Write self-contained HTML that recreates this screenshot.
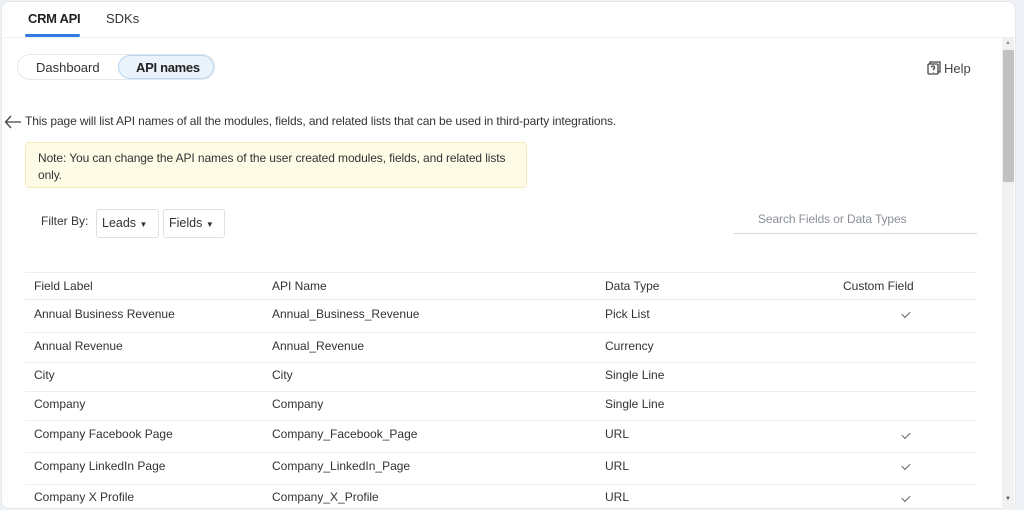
<!DOCTYPE html>
<html><head><style>
*{margin:0;padding:0;box-sizing:border-box}
body{width:1024px;height:510px;background:#eef1f5;font-family:"Liberation Sans",sans-serif;color:#333;position:relative;overflow:hidden;font-size:12px}
.card{position:absolute;left:1px;top:1px;width:1015px;height:508px;background:#fff;border:1px solid #e4e7ec;border-radius:8px;overflow:hidden}
.a{position:absolute;white-space:nowrap}
.sb{position:absolute;left:1002px;top:38px;width:12px;height:471px;background:#f1f1f1}
.th{position:absolute;left:1003px;top:50px;width:11px;height:132px;background:#c1c1c1}
.line{position:absolute;left:25px;width:952px;height:1px;background:#eceef2}
.ck{position:absolute;width:8px;height:5px;border-left:1.2px solid #666;border-bottom:1.2px solid #666;transform:rotate(-45deg)}
</style></head><body>
<div class="card"></div>
<div class="a" style="left:28px;top:11px;font-size:13px;font-weight:bold;color:#222;letter-spacing:-0.3px">CRM API</div>
<div class="a" style="left:25px;top:34px;width:55px;height:3px;border-radius:2px;background:#2f7de1"></div>
<div class="a" style="left:106px;top:11px;font-size:13px;color:#333">SDKs</div>
<div class="a" style="left:1px;top:37px;width:1014px;height:1px;background:#eef0f3"></div>
<div class="a" style="left:17px;top:54px;width:198px;height:26px;border:1px solid #e4e7ec;border-radius:14px;background:#fff"></div>
<div class="a" style="left:36px;top:60px;font-size:13px;color:#333">Dashboard</div>
<div class="a" style="left:118px;top:55px;width:96px;height:24px;border:1px solid #b9d7f0;border-radius:13px;background:#eaf3fb"></div>
<div class="a" style="left:136px;top:60px;font-size:13px;font-weight:bold;color:#222;letter-spacing:-0.3px">API names</div>
<svg class="a" style="left:927px;top:61px" width="14" height="14" viewBox="0 0 14 14" fill="none" stroke="#444" stroke-width="1.3"><rect x="1" y="3" width="10" height="10" rx="1"/><path d="M3 3V1h10v10h-2"/><path d="M4.5 6.5a1.5 1.5 0 1 1 2 1.4v1.3M6.5 11v.5"/></svg>
<div class="a" style="left:944px;top:61px;font-size:13px;color:#444">Help</div>
<svg class="a" style="left:4px;top:115px" width="18" height="14" viewBox="0 0 18 14" fill="none" stroke="#444" stroke-width="1.3"><path d="M17 7H2M7 1L1.5 7 7 13"/></svg>
<div class="a" style="left:25px;top:114px;font-size:12px;color:#333;letter-spacing:-0.12px">This page will list API names of all the modules, fields, and related lists that can be used in third-party integrations.</div>
<div class="a" style="left:25px;top:142px;width:502px;height:46px;background:#fefbe6;border:1px solid #f4ecbc;border-radius:4px"></div>
<div class="a" style="left:38px;top:150px;font-size:12px;color:#333;line-height:17px;letter-spacing:-0.1px">Note: You can change the API names of the user created modules, fields, and related lists<br>only.</div>
<div class="a" style="left:41px;top:214px;color:#333">Filter By:</div>
<div class="a" style="left:96px;top:209px;width:63px;height:29px;border:1px solid #dde1e6;border-radius:3px"></div>
<div class="a" style="left:102px;top:216px;font-size:12.5px">Leads <span style="font-size:8px">▼</span></div>
<div class="a" style="left:163px;top:209px;width:62px;height:29px;border:1px solid #dde1e6;border-radius:3px"></div>
<div class="a" style="left:169px;top:216px;font-size:12.5px">Fields <span style="font-size:8px">▼</span></div>
<div class="a" style="left:758px;top:212px;color:#8a8f98;letter-spacing:-0.1px">Search Fields or Data Types</div>
<div class="a" style="left:733px;top:233px;width:244px;height:1px;background:#d8dce2"></div>
<div class="line" style="top:272px"></div>
<div class="line" style="top:299px;background:#e4e7ec"></div>
<div class="a" style="left:34px;top:279px">Field Label</div>
<div class="a" style="left:272px;top:279px">API Name</div>
<div class="a" style="left:605px;top:279px">Data Type</div>
<div class="a" style="left:843px;top:279px">Custom Field</div>
<div class="line" style="top:332px"></div>
<div class="line" style="top:362px"></div>
<div class="line" style="top:391px"></div>
<div class="line" style="top:420px"></div>
<div class="line" style="top:452px"></div>
<div class="line" style="top:484px"></div>
<div class="a" style="left:34px;top:307px">Annual Business Revenue</div><div class="a" style="left:272px;top:307px">Annual_Business_Revenue</div><div class="a" style="left:605px;top:307px">Pick List</div><div class="ck" style="left:902px;top:311px"></div>
<div class="a" style="left:34px;top:339px">Annual Revenue</div><div class="a" style="left:272px;top:339px">Annual_Revenue</div><div class="a" style="left:605px;top:339px">Currency</div>
<div class="a" style="left:34px;top:368px">City</div><div class="a" style="left:272px;top:368px">City</div><div class="a" style="left:605px;top:368px">Single Line</div>
<div class="a" style="left:34px;top:397px">Company</div><div class="a" style="left:272px;top:397px">Company</div><div class="a" style="left:605px;top:397px">Single Line</div>
<div class="a" style="left:34px;top:427px">Company Facebook Page</div><div class="a" style="left:272px;top:427px">Company_Facebook_Page</div><div class="a" style="left:605px;top:427px">URL</div><div class="ck" style="left:902px;top:432px"></div>
<div class="a" style="left:34px;top:459px">Company LinkedIn Page</div><div class="a" style="left:272px;top:459px">Company_LinkedIn_Page</div><div class="a" style="left:605px;top:459px">URL</div><div class="ck" style="left:902px;top:463px"></div>
<div class="a" style="left:34px;top:490px">Company X Profile</div><div class="a" style="left:272px;top:490px">Company_X_Profile</div><div class="a" style="left:605px;top:490px">URL</div><div class="ck" style="left:902px;top:495px"></div>
<div class="sb"></div><div class="th"></div>
<div class="a" style="left:1005px;top:40px;font-size:6px;color:#999">▲</div>
<div class="a" style="left:1005px;top:496px;font-size:6px;color:#555">▼</div>
</body></html>
